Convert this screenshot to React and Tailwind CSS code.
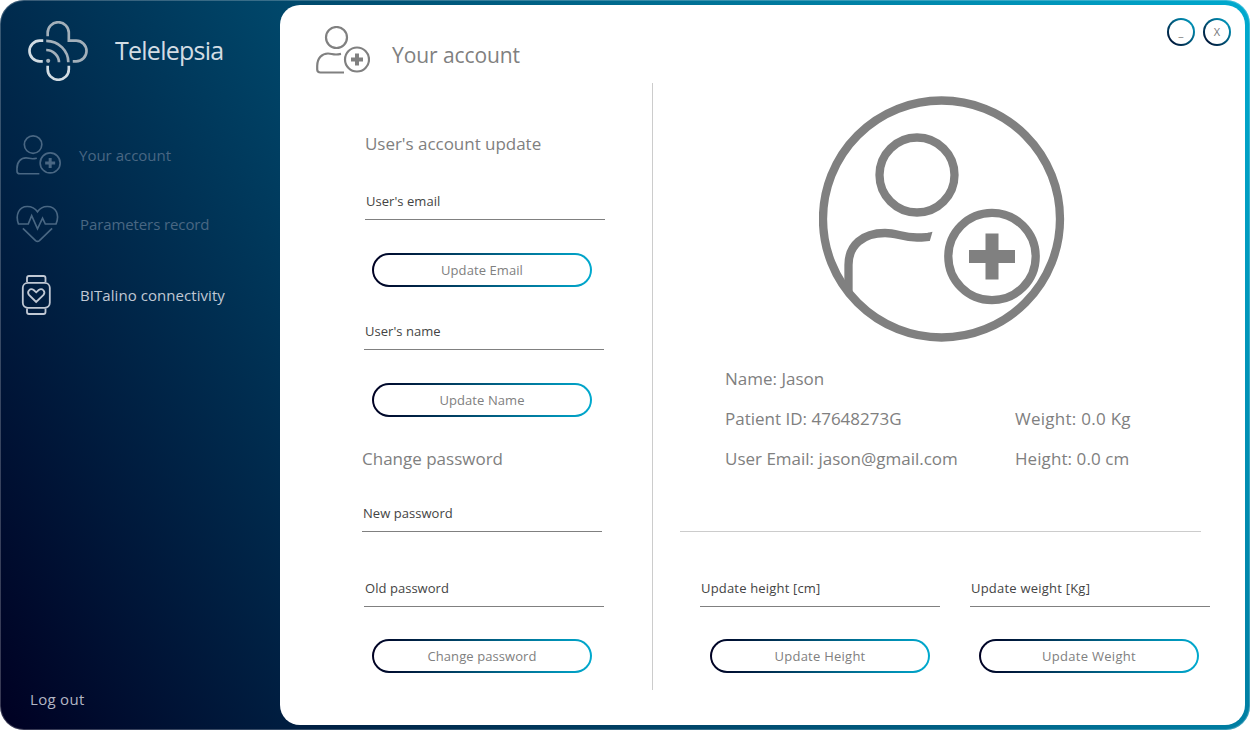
const grad = "bg-[linear-gradient(60deg,#000022,#00aacf)] shadow-[inset_0_0_0_1px_rgba(255,255,255,0.22)]";

function PersonAdd({ className, sw = 2 }) {
  return (
    <svg className={className} viewBox="0 0 54 48" fill="none" stroke="currentColor" strokeWidth={sw}>
      <circle cx="20.5" cy="11.500" r="10.500" />
      <path d="M28 46.500H4.500Q1.200 46.500 1.200 43.500V40C1.200 32 6 27.500 12 27.500C15.500 27.500 16 28.500 20 28.500C22 28.500 23 28.300 25 27.900" />
      <circle cx="41" cy="33.500" r="12" />
      <path d="M41 27.500V39.500M35 33.500H47" strokeWidth={sw * 1.8} />
    </svg>
  );
}

function Logo() {
  return (
    <svg className="h-[60px] w-[60px] shrink-0" viewBox="0.5 0.5 61 61" fill="none" strokeWidth="2.700">
      <path stroke="#a3b0ba" d="M20.500 16V12.500A10.700 10.700 0 0 1 42 12.500V20.500H49.500A10.500 10.500 0 0 1 49.500 41.500H46M19 20.700C32 20.700 41.500 31 41.500 42.500M19 30C26 30 32 36 32 42.500" />
      <path stroke="#d2dce3" d="M16 20.500H12.500A10.500 10.500 0 0 0 12.500 41.500H15.500M20.500 46V49.500A10.700 10.700 0 0 0 42 49.500V46" />
      <circle cx="21" cy="41" r="2.100" fill="#a3b0ba" />
    </svg>
  );
}

function HeartPulse() {
  return (
    <svg className="h-[38px] w-[43px]" viewBox="0 0 44 39" fill="none" stroke="currentColor" strokeWidth="1.700">
      <path d="M2.500 19.500C-1 10 3 1.500 11.500 1.500C17 1.500 20 4 22 7C24 4 27 1.500 32 1.500C41 1.500 45 10 41 19.500H30L27.200 13.500L22 24.500L16 11L12.500 19.500ZM7 24L20 36.500Q22 38.200 24 36.500L37 24" />
    </svg>
  );
}

function Watch() {
  return (
    <svg className="h-[40px] w-[30px]" viewBox="0 0 30 40" fill="none" stroke="currentColor" strokeWidth="1.800">
      <rect x="1.800" y="7.800" width="27" height="25" rx="5" />
      <path d="M6 7V3Q6 1 8 1H22.500Q24.500 1 24.500 3V7M6 33.500V37Q6 39 8 39H22.500Q24.500 39 24.500 37V33.500" />
      <path d="M15.200 27L8 20C5.500 16.500 9.200 12.500 12.700 15L15.200 17.300L17.700 15C21.200 12.500 25 16.500 22.500 20Z" />
    </svg>
  );
}

function Avatar() {
  return (
    <svg className="h-[246px] w-[246px]" viewBox="0 0 246 246" fill="none" stroke="#808080" strokeWidth="8.300">
      <circle cx="122.500" cy="123" r="118.500" />
      <circle cx="98" cy="79" r="37.500" />
      <path d="M29.500 196V169C29.500 149 44 137 66 137C78 137 83 141.500 98 141.500C104 141.500 107 141 110 140.800" />
      <path d="M109 136.700L113.500 135.800L110.800 145L109 145Z" fill="#808080" stroke="none" />
      <circle cx="173" cy="160.500" r="43.700" />
      <path d="M173 137.500V183.500M150 160.500H196" strokeWidth="13" />
    </svg>
  );
}

function GradientButton({ children, tracking = "tracking-[0.08px]" }) {
  return (
    <button className="h-[34px] w-[220px] rounded-full bg-linear-to-r/srgb from-[#000022] to-[#00aacf] p-[2px]">
      <span className={`flex h-full items-center justify-center rounded-full bg-white pt-[2px] text-[13px] text-[#808080] ${tracking}`}>{children}</span>
    </button>
  );
}

function Field({ children, tracking = "tracking-[0.04px]" }) {
  return (
    <div className="h-[30px] w-[240px] border-b border-[#808080] pl-px text-[13px] leading-[22px] text-[#444]">
      <span className={tracking}>{children}</span>
    </div>
  );
}

function WindowButton({ children }) {
  return (
    <button className="h-7 w-7 rounded-full bg-linear-to-tr/srgb from-[#000022] to-[#00aacf] p-[2px]">
      <span className="flex h-full items-center justify-center rounded-full bg-white text-[11px] text-[#777]">{children}</span>
    </button>
  );
}

export default function App() {
  return (
    <div className={`flex h-[730px] w-[1250px] overflow-hidden rounded-[24px] font-['Open_Sans',sans-serif] ${grad}`}>
      <aside className="flex w-[280px] shrink-0 flex-col">
        <div className="flex h-[62px] pl-7 pt-[21px] text-[#d2dce3]">
          <Logo />
          <span className="ml-[27px] mt-[11px] text-[25px] leading-[36px] tracking-[-0.75px]">Telelepsia</span>
        </div>
        <nav className="mt-[73px] text-[15px]">
          <div className="flex h-10 items-center pl-4 text-[#496783]">
            <PersonAdd className="h-10 w-[45px]" />
            <span className="ml-[18px]">Your account</span>
          </div>
          <div className="mt-[29px] flex h-10 items-center pl-4 text-[#496783]">
            <HeartPulse />
            <span className="ml-[21px] tracking-[-0.1px]">Parameters record</span>
          </div>
          <div className="mt-[31px] flex h-10 items-center pl-[21px] text-[#c0c8d4]">
            <Watch />
            <span className="ml-[29px] tracking-[0.06px]">BITalino connectivity</span>
          </div>
        </nav>
        <span className="mb-[19px] ml-[30px] mt-auto text-[15px] leading-6 tracking-[0.3px] text-[#b3b6c4]">Log out</span>
      </aside>
      <main className="mb-[5px] mr-[5px] mt-[5px] flex flex-1 flex-col rounded-[20px] bg-white text-[#808080]">
        <header className="flex h-[78px] shrink-0">
          <PersonAdd className="ml-9 mt-[21px] h-12 w-[54px]" sw={2.2} />
          <h1 className="ml-[22px] mt-[34px] text-[21px] leading-8 tracking-[-0.08px]">Your account</h1>
          <div className="ml-auto mr-[14px] mt-[13px] flex gap-2">
            <WindowButton>_</WindowButton>
            <WindowButton>X</WindowButton>
          </div>
        </header>
        <div className="flex flex-1">
          <section className="flex h-[607px] w-[373px] shrink-0 flex-col border-r border-[#ccc]">
            <h2 className="ml-[85px] mt-12 text-[17px] leading-[26px] tracking-[-0.03px]">User's account update</h2>
            <div className="ml-[85px] mt-[33px]"><Field>User's email</Field></div>
            <div className="ml-[92px] mt-[33px] h-[34px]"><GradientButton>Update Email</GradientButton></div>
            <div className="ml-[84px] mt-[33px]"><Field>User's name</Field></div>
            <div className="ml-[92px] mt-[33px] h-[34px]"><GradientButton>Update Name</GradientButton></div>
            <h2 className="ml-[82px] mt-[29px] text-[17px] leading-[26px]">Change password</h2>
            <div className="ml-[82px] mt-[30px]"><Field>New password</Field></div>
            <div className="ml-[84px] mt-[45px]"><Field>Old password</Field></div>
            <div className="ml-[92px] mt-8 h-[34px]"><GradientButton>Change password</GradientButton></div>
          </section>
          <section className="flex-1">
            <div className="ml-[166px] mt-[13px] h-[246px]"><Avatar /></div>
            <div className="ml-[72px] mt-[17px] grid grid-cols-[290px_auto] text-[17px] leading-10">
              <span className="col-span-2">Name: Jason</span>
              <span>Patient ID: 47648273G</span>
              <span className="tracking-[0.27px]">Weight: 0.0 Kg</span>
              <span>User Email: jason@gmail.com</span>
              <span className="tracking-[0.08px]">Height: 0.0 cm</span>
            </div>
            <div className="ml-[27px] mt-[52px] h-px w-[521px] bg-[#ccc]" />
            <div className="ml-[47px] mt-[45px] flex gap-[30px]">
              <Field tracking="tracking-[0.18px]">Update height [cm]</Field>
              <Field tracking="tracking-[0.22px]">Update weight [Kg]</Field>
            </div>
            <div className="ml-[57px] mt-8 flex gap-[49px]">
              <GradientButton tracking="tracking-[0.25px]">Update Height</GradientButton>
              <GradientButton tracking="tracking-[0.3px]">Update Weight</GradientButton>
            </div>
          </section>
        </div>
      </main>
    </div>
  );
}
